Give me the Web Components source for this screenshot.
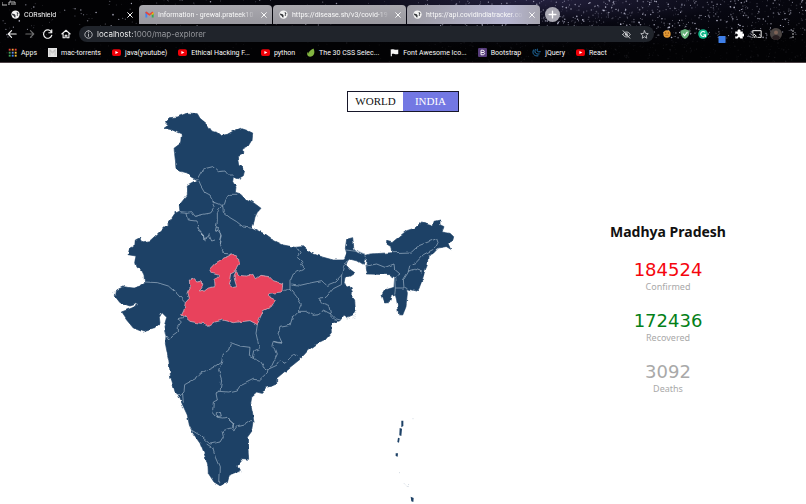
<!DOCTYPE html>
<html lang="en">
<head>
<meta charset="utf-8">
<title>CORshield</title>
<style>
html, body { margin: 0; min-height: 100vh; }
body { background: #fff; font-family: Roboto, "Open Sans", sans-serif; overflow-x: hidden; }
</style>
</head>
<body>
<browser-frame>
  <tab-strip slot="tabs">
    <browser-tab active icon="globe">CORshield</browser-tab>
    <browser-tab icon="mail">Information - grewal.prateek10</browser-tab>
    <browser-tab icon="globe">https://disease.sh/v3/covid-19</browser-tab>
    <browser-tab icon="globe">https://api.covidindiatracker.co</browser-tab>
  </tab-strip>
  <browser-toolbar slot="toolbar"></browser-toolbar>
  <bookmark-bar slot="bookmarks">
    <book-mark icon="apps">Apps</book-mark>
    <book-mark icon="torrent">mac-torrents</book-mark>
    <book-mark icon="youtube">java(youtube)</book-mark>
    <book-mark icon="youtube">Ethical Hacking F...</book-mark>
    <book-mark icon="youtube">python</book-mark>
    <book-mark icon="leaf">The 30 CSS Selec...</book-mark>
    <book-mark icon="flag">Font Awesome Ico...</book-mark>
    <book-mark icon="bootstrap">Bootstrap</book-mark>
    <book-mark icon="jquery">jQuery</book-mark>
    <book-mark icon="youtube">React</book-mark>
  </bookmark-bar>
</browser-frame>
<map-explorer>
  <region-toggle slot="toggle"></region-toggle>
  <india-map slot="map"></india-map>
  <state-panel slot="panel">
    <span slot="name">Madhya Pradesh</span>
    <case-count color="#f5050d" value="184524">Confirmed</case-count>
    <case-count color="#048018" value="172436">Recovered</case-count>
    <case-count color="#a9a9a9" value="3092">Deaths</case-count>
  </state-panel>
</map-explorer>

<script>
const svg = (body, size = 10, extra = '') =>
  `<svg width="${size}" height="${size}" viewBox="0 0 24 24" aria-hidden="true" ${extra}>${body}</svg>`;
const line = (d, w = 2.4) => `<path d="${d}" fill="none" stroke="currentColor" stroke-width="${w}" stroke-linecap="round" stroke-linejoin="round"/>`;

const icons = {
  globe: '<circle cx="12" cy="12" r="11" fill="#f4f4f4"/><path d="M3 9l7 2 2 3 0 6-3-1-2-4-4-2zM12 4l2 3 4-1 2 4-4 1-1 3 2 2 2-3" fill="#34363a"/>',
  mail: '<path d="M1 5h5v15H1z" fill="#4285f4"/><path d="M18 9h5v11h-5z" fill="#34a853"/><path d="M18 5h3l2 2v4l-5 2z" fill="#fbbc04"/><path d="M1 6l3-2 8 6 8-6 2 2-10 9L1 8z" fill="#ea4335"/>',
  apps: ['#ea4335', '#f29b38', '#ea4335', '#42a55a', '#6a8fe8', '#f0bd35', '#42a55a', '#4285f4', '#f0bd35'].map((c, i) => `<rect x="${2 + (i % 3) * 8}" y="${2 + Math.floor(i / 3) * 8}" width="5" height="5" fill="${c}"/>`).join(''),
  torrent: '<rect x="0" y="0" width="24" height="24" fill="#e4e4e4"/><path d="M5 20V6l7 8 7-8v14M4 3l7 7M20 3l-7 7" fill="none" stroke="#a5a5a5" stroke-width="1.500"/>',
  youtube: '<rect x="0" y="3" width="24" height="18" rx="5" fill="#f00008"/><path d="M9 8l8 4-8 4z" fill="#fff"/>',
  leaf: '<path d="M20 1c4 8 3 18-4 21-6 3-13 0-13-6 0-2 1-5 3-6 0 2 0 4 1 5C7 8 13 5 20 1z" fill="#82b541"/>',
  flag: '<path d="M3 4c6-3 9 3 19 0v12c-9 3-12-3-17 0v6H2V3z" fill="#f5f5f5"/>',
  bootstrap: '<rect x="0" y="0" width="24" height="24" rx="3" fill="#573d7c"/><path d="M8 6h5c5 0 5 5 1 6 5 0 5 6-1 6H8zM8 12h6" fill="none" stroke="#fff" stroke-width="2.5"/>',
  jquery: '<path d="M4 5c-5 9 2 18 12 16M9 4c-4 7 1 14 10 12M14 3c-2 5 1 9 8 7" fill="none" stroke="#2479b5" stroke-width="2.5" stroke-linecap="round"/>',
  close: line('M5 5l14 14M19 5L5 19', 3),
  back: line('M22 12H3M11 4l-8 8 8 8', 2.8),
  forward: line('M2 12h19M13 4l8 8-8 8', 2.8),
  reload: line('M20 7a10 10 0 1 0 1 8M21 2v7h-7', 2.8),
  home: line('M2 12L12 3l10 9M5 11v10h5v-6h4v6h5V11', 2.6),
  info: line('M12 2a10 10 0 1 0 .1 0M12 11v6M12 7v.3', 2.2),
  hidden: line('M2 12c5-9 15-9 20 0-5 9-15 9-20 0M3 2l18 20M9 12a3 3 0 1 0 6 0 3 3 0 1 0-6 0', 2.6),
  star: line('M12 2l3 7 7 .6-5.400 5L18 22l-6-4-6 4 1.400-7.400L2 9.600 9 9z', 2.2),
  plus: line('M12 3v18M3 12h18', 3.6),
  cookie: '<circle cx="12" cy="12" r="11" fill="#e49a35"/><circle cx="8" cy="9" r="2" fill="#8a5016"/><circle cx="16" cy="9" r="2" fill="#8a5016"/><path d="M7 16h9" stroke="#8a5016" stroke-width="2"/>',
  shield: '<path d="M12 0l11 4c0 10-3 16-11 20C4 20 1 14 1 4z" fill="#67b279"/><path d="M7 11l4 5 7-9" fill="none" stroke="#fff" stroke-width="2.500"/>',
  grammar: '<circle cx="12" cy="12" r="11.500" fill="#12b88a"/><path d="M17 8a6 6 0 1 0 1 6h-5M18 14v5" fill="none" stroke="#fff" stroke-width="2.500"/>',
  puzzle: '<path d="M3 6h6a3.500 3.500 0 1 1 6 0h6v6a3.500 3.500 0 1 1 0 5v6h-6a3 3 0 1 0-6 0H3v-6a3.500 3.500 0 1 0 0-5z" fill="#fff"/>',
  cast: line('M2 9V4h20v16h-8M2 20v.2M2 16c3 0 4 1 4 4M2 12c5 0 8 3 8 8', 2.4),
  blue: '<path d="M3 6l7-5" stroke="#555" stroke-width="2"/><rect x="6" y="7" width="17" height="17" rx="1" fill="#3f7fe8"/>',
  avatar: '<circle cx="12" cy="12" r="12" fill="#4b4543"/><path d="M4 20c2-8 14-8 16 0-4 5-12 5-16 0" fill="#291f21"/><circle cx="12" cy="9" r="4" fill="#7d6256"/>',
  dots: '<circle cx="12" cy="3" r="2.300" fill="#eee"/><circle cx="12" cy="12" r="2.300" fill="#eee"/><circle cx="12" cy="21" r="2.300" fill="#eee"/>'
};

const define = (name, template) => customElements.define(name, class extends HTMLElement {
  connectedCallback() {
    if (!this.shadowRoot) this.attachShadow({ mode: 'open' }).innerHTML = template(this);
  }
});

function starField() {
  let seed = 71, out = '';
  const rnd = () => (seed = (seed * 16807) % 2147483647) / 2147483647;
  for (let i = 0; i < 3400; i++) {
    const x = Math.round(rnd() * 8060) / 10, y = Math.round(rnd() * 620) / 10, dense = x > 440 ? 1 : 0.18;
    const fade = y > 38 ? 0.12 : 1;
    if (rnd() > dense) continue;
    out += `<circle cx="${x}" cy="${y}" r="${(0.3 + rnd() * 0.55).toFixed(2)}" opacity="${((0.15 + rnd() * 0.7) * fade).toFixed(2)}"/>`;
  }
  return out;
}

define('browser-frame', () => `<style>
  :host { display: block; position: relative; background: radial-gradient(ellipse at 66% 0, #24213f, #070711 28%, #020204 55%); color: #f2f2f2; border-bottom: 1px solid #4c4246; }
  .sky { position: absolute; inset: 0; width: 100%; height: 100%; }
  .corner { position: absolute; left: 2px; top: 1px; }
  .rows { position: relative; display: grid; grid-template-rows: 25px 18px 19px; }
</style>
<svg class="sky" viewBox="0 0 806 62" preserveAspectRatio="none" fill="#d9d9ee" aria-hidden="true">${starField()}</svg>
<svg class="corner" width="15" height="5" viewBox="0 0 15 5" aria-hidden="true"><path d="M0 1v3h5M7 4V1h6v3M9 3h3" fill="none" stroke="#bbb"/></svg>
<div class="rows"><slot name="tabs"></slot><slot name="toolbar"></slot><slot name="bookmarks"></slot></div>`);

define('tab-strip', () => `<style>
  :host { display: flex; align-items: end; padding-bottom: 1px; gap: 1px; }
  button { all: unset; box-sizing: border-box; width: 15px; height: 15px; border-radius: 50%; background: #aaa9b3; color: #fff; display: grid; place-items: center; margin: 0 0 2px 4px; }
</style><slot></slot><button aria-label="New tab">${svg(icons.plus, 9)}</button>`);

define('browser-tab', el => `<style>
  :host { display: flex; align-items: center; box-sizing: border-box; flex: 0 1 133px; min-width: 0; height: 19px; padding: 0 4px 0 6px; gap: 4px; border-radius: 4px 4px 0 0; background: linear-gradient(#a9a8ae, #99989f); color: #f8f8f8; font-size: 7px; line-height: 12px; }
  :host([active]) { flex-basis: 138px; padding-left: 11px; background: none; }
  :host(:last-of-type) { background: linear-gradient(90deg, #9d9ca4, #b6b5d0 75%, #a7a6b0); }
  .title { flex: 1; min-width: 0; overflow: hidden; white-space: nowrap; mask-image: linear-gradient(90deg, #000 86%, transparent); }
  button { all: unset; display: grid; place-items: center; }
  svg { flex: none; }
</style>${svg(icons[el.getAttribute('icon')], 9)}<span class="title"><slot></slot></span><button aria-label="Close tab">${svg(icons.close, 8)}</button>`);

define('browser-toolbar', () => `<style>
  :host { display: flex; align-items: center; gap: 8px; padding: 0 8px 0 7px; }
  button { all: unset; display: grid; place-items: center; flex: none; width: 10px; }
  .dim { opacity: .45; }
  .box { flex: 1; min-width: 0; display: flex; align-items: center; box-sizing: border-box; height: 16px; padding: 0 5px; gap: 4px; border-radius: 8px; background: #20242b; color: #cfd0d3; }
  input { all: unset; flex: 1; min-width: 0; font: 8px/12px Inter, "Open Sans", sans-serif; color: #a2a4a8; background: linear-gradient(90deg, #fff 36px, #9b9da2 36px); background-clip: text; -webkit-background-clip: text; -webkit-text-fill-color: transparent; }
  .box button + button { margin-left: 4px; }
  .tools { display: flex; align-items: center; gap: 8px; }
  .blue { align-self: end; padding-top: 8px; }
</style>
<button aria-label="Back">${svg(icons.back)}</button><button class="dim" aria-label="Forward">${svg(icons.forward)}</button><button aria-label="Reload">${svg(icons.reload)}</button><button aria-label="Home">${svg(icons.home)}</button>
<div class="box">${svg(icons.info, 9)}<input aria-label="Address" value="localhost:1000/map-explorer"><button aria-label="Tracking">${svg(icons.hidden, 9)}</button><button aria-label="Bookmark">${svg(icons.star, 9)}</button></div>
<div class="tools">${['cookie', 'shield', 'grammar', 'blue', 'puzzle', 'cast', 'avatar', 'dots'].map(n => `<button class="${n}" aria-label="${n}">${svg(icons[n], n === 'avatar' ? 12 : n === 'cookie' || n === 'dots' ? 8 : 10)}</button>`).join('')}</div>`);

define('bookmark-bar', () => `<style>:host { display: flex; align-items: center; gap: 11px; padding: 0 8px; overflow: hidden; }</style><slot></slot>`);

define('book-mark', el => `<style>
  :host { display: block; flex: none; }
  a { display: flex; align-items: center; gap: 4px; color: #f8f8f8; text-decoration: none; font-size: 7px; line-height: 12px; white-space: nowrap; }
</style><a href="#">${svg(icons[el.getAttribute('icon')], 9)}<slot></slot></a>`);

define('map-explorer', () => `<style>
  :host { display: block; padding-top: 28px; }
  .content { display: grid; grid-template-columns: 566fr 204fr; padding-right: 36px; align-items: center; }
</style><slot name="toggle"></slot><div class="content"><slot name="map"></slot><slot name="panel"></slot></div>`);

define('region-toggle', () => `<style>
  :host { display: flex; justify-content: center; }
  div { display: grid; grid-template-columns: 1fr 1fr; width: 110px; border: 1px solid #17172a; }
  button { border: 0; margin: 0; padding: 0; height: 19px; background: #fff; color: #111; font: 11px/19px "Liberation Serif", serif; }
  button[aria-pressed="true"] { background: #7378e3; color: #fff; }
</style><div role="group" aria-label="Region"><button aria-pressed="false">WORLD</button><button aria-pressed="true">INDIA</button></div>`);

define('state-panel', () => `<style>
  :host { display: flex; flex-direction: column; align-items: center; gap: 17px; font-family: "Noto Sans", "Open Sans", sans-serif; }
  h1 { margin: 0; font-size: 14px; line-height: 20px; font-weight: 700; color: #111; white-space: nowrap; }
</style><h1><slot name="name"></slot></h1><slot></slot>`);

define('case-count', el => `<style>
  :host { display: block; text-align: center; }
  .value { font: 18px/22px "DejaVu Sans", sans-serif; color: ${el.getAttribute('color')}; }
  .label { font-size: 9px; line-height: 12px; color: #a9a9a9; }
</style><div class="value">${el.getAttribute('value')}</div><div class="label"><slot></slot></div>`);

define('india-map', () => `<style>
  :host { display: block; }
  svg { display: block; width: 100%; height: auto; }
  .land { fill: #1d4166; stroke: #1d4166; stroke-width: 2; }
  .border { fill: none; stroke: #a3b7c9; stroke-width: 2; stroke-linejoin: round; }
  .selected { fill: #e8425c; stroke: #d9c6d0; stroke-width: 2; }
</style>
<svg viewBox="0 336 1698 1176" role="img" aria-label="Map of India with Madhya Pradesh selected">
<defs><filter id="rough" x="0" y="0" width="1" height="1" color-interpolation-filters="sRGB"><feTurbulence type="fractalNoise" baseFrequency=".06" numOctaves="1" seed="4"/><feDisplacementMap in="SourceGraphic" scale="11" xChannelSelector="R" yChannelSelector="G" result="d"/><feGaussianBlur in="d" stdDeviation=".8"/></filter></defs>
<g filter="url(#rough)">
<rect x="0" y="336" width="1698" height="1176" fill="none"/>
<path class="land" d="M492 385L505 375 496 365 508 353 532 351 562 339 592 341 600 355 622 373 635 393 650 397 662 407 682 403 700 393 722 385 740 391 758 399 756 419 744 439 728 447 728 463 712 471 716 495 734 511 730 527 715 536 700 531 698 545 708 561 706 577 720 581 734 595 756 605 770 615 783 625 772 637 765 651 762 665 755 683 790 700 815 718 850 735 885 742 910 740 935 760 970 772 1000 780 1032 780 1040 760 1036 745 1040 718 1058 713 1062 748 1072 758 1095 766 1110 762 1178 758 1176 742 1160 732 1160 724 1176 728 1200 708 1220 692 1245 684 1265 666 1288 672 1300 676 1302 664 1320 660 1320 674 1332 680 1326 696 1350 700 1361 710 1358 722 1344 730 1352 748 1340 740 1315 744 1300 760 1284 768 1282 795 1274 814 1268 836 1256 868 1250 874 1220 866 1222 880 1218 920 1208 945 1196 944 1190 900 1186 885 1174 890 1168 905 1154 906 1146 885 1155 870 1182 862 1184 832 1170 824 1102 822 1098 796 1100 780 1094 778 1090 793 1075 784 1060 780 1045 776 1038 795 1050 808 1064 818 1050 828 1035 832 1032 850 1050 860 1057 875 1056 890 1064 900 1066 930 1058 945 1042 952 1032 945 1020 962 1000 968 993 975 994 998 975 1020 950 1032 925 1050 900 1078 875 1098 850 1118 830 1135 830 1152 815 1158 798 1162 785 1180 770 1176 756 1188 752 1210 758 1240 762 1265 758 1290 742 1312 746 1378 730 1376 712 1398 718 1414 688 1426 682 1448 660 1457 642 1446 625 1420 624 1400 615 1368 600 1330 578 1298 568 1275 562 1245 548 1215 535 1185 525 1175 512 1130 506 1080 500 1050 496 1030 498 1008 492 980 500 952 486 938 478 952 480 970 460 986 430 996 400 984 380 960 364 936 380 930 410 918 416 910 390 918 360 908 346 890 350 870 370 860 400 864 420 858 434 850 432 825 422 805 408 802 404 788 408 768 384 764 388 748 404 740 406 720 418 714 426 726 450 722 472 702 505 670 525 640 540 633 538 615 562 585 562 555 590 540 572 530 562 519 540 513 528 505 526 480 522 445 542 430 544 402 515 389Z"/>
<g class="border">
 <path transform="translate(300 315)" d="M290 225L305 198 318 190 338 185 355 200 375 198 385 210 405 210M296 226L302 240 315 262 330 270 342 292 368 302 375 280 390 268 412 268M240 320L262 322 275 320 285 334 310 328 332 324 345 305 338 288M258 322L262 345 288 348 296 372 310 388 312 402 328 392 335 408 345 405M368 303L370 322 390 338 410 350 430 366 458 370M368 302L352 322 352 350 346 378 354 380 355 366 349 368M354 380L364 390 358 418"/>
 <path transform="translate(300 690)" d="M294 0L310 12 312 30 325 22 328 10M358 0L362 20 358 38 368 58 365 70 398 72M135 156L172 158 205 168 230 190 255 218M256 262L234 266 244 276 232 292 232 306 215 318 206 330 198 318"/>
 <path transform="translate(810 600)" d="M80 140L90 158 82 170 98 184 92 198 104 206 70 222 60 244 60 268 40 275M64 252L90 256 125 248 155 242 170 256 195 246 215 225 220 200 234 178M62 268L80 290 94 312 84 334 110 334 130 346 150 344 160 330 182 342 195 356 212 360M215 226L214 254 190 266 168 292 146 294 158 310 176 316 182 342M84 334L68 350 60 376 30 382 24 402 36 428 12 425M228 150L260 154 285 166M284 166L290 180M288 198L320 192 345 202 372 192 374 208 390 222 374 232 376 264M368 158L425 156 444 138 500 116 504 128 496 144M490 148L460 164 438 188 420 194 414 218 400 240 402 264 376 264M414 214L434 208 456 216M376 264L374 284M404 262L412 266"/>
 <path transform="translate(450 930)" d="M322 44L318 70 328 115 314 122 310 142 332 158 342 174 354 178 366 166 382 132 376 116 366 106 370 94 382 98 396 100M310 142L298 136 300 112 270 108 242 98 236 120 220 132 215 155 190 172 150 190 140 204 104 224 102 246 90 258M215 155L206 180 215 210 210 244 236 246 262 240 270 228 310 208 328 210 352 188 354 178L380 166 390 152 405 160 430 132 450 144M210 244L198 250 202 270 190 276 188 306 200 320 214 318 210 304 202 308 202 322 218 324 230 322 250 342 250 356"/>
 <path transform="translate(420 1050)" d="M110 134L128 132 130 158M154 240L180 256 210 282 240 276 250 260 246 242 272 234 280 244 290 230 315 224 332 212 342 212M262 205L282 222 276 234M200 282L218 294 226 322 238 350 236 400"/>
</g>
<path class="selected" transform="translate(300 690)" d="M398 72L415 84 418 98 410 112 406 124 395 130 392 150 388 162 400 172 410 170 404 150 402 138 408 124 418 136 440 138 458 132 466 146 480 136 508 140 520 152 548 160 546 186 508 190 510 202 526 210 514 230 490 242 478 268 472 284 450 272 400 278 370 270 345 276 335 284 322 292 315 282 290 278 270 274 256 262 245 255 252 240 256 218 268 205 264 190 270 175 268 150 284 146 290 156 304 154 306 172 298 186 312 184 325 174 345 170 344 150 358 136 335 130 328 118 345 100 372 84Z"/>
</g>
<g fill="#1d4166"><path d="M1204 1262h6v16l-6 4zM1199 1284l7 2-2 22-6-2zM1194 1313l5 2-2 13-5-2zM1187 1360h7l-1 10-6-2zM1232 1490l9 4-1 12-6-2z"/></g>
<g fill="none" stroke="#9aabbd" stroke-width="2" stroke-dasharray="2 4"><path d="M336 878l10-4-4 8 8 4-12 0M1068 930l-4 28M1062 945l-4 12M1050 955l-10 2M1041 956v6M1238 1256h2M1198 1418h3M1212 1450l12 12 2-10M718 1416l12-1"/></g>
</svg>`);
</script>
</body>
</html>
